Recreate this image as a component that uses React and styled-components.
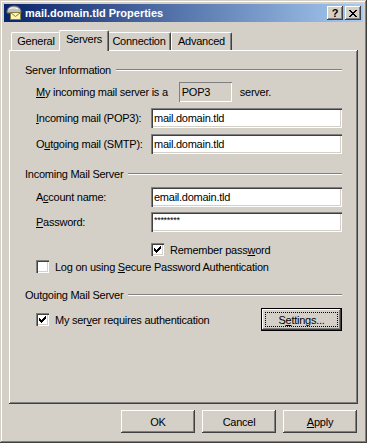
import React from 'react';
import styled, { createGlobalStyle } from 'styled-components';

const Global = createGlobalStyle`
  html, body { margin: 0; padding: 0; background: #d4d0c8; }
`;

const raised = `
  box-shadow: inset -1px -1px #404040, inset 1px 1px #ffffff,
    inset -2px -2px #808080, inset 2px 2px #d4d0c8;
`;

const sunken = `
  box-shadow: inset 1px 1px #808080, inset 2px 2px #404040,
    inset -1px -1px #ffffff, inset -2px -2px #d4d0c8;
`;

const Window = styled.div`
  width: 367px;
  height: 443px;
  box-sizing: border-box;
  padding: 4px;
  background: #d4d0c8;
  box-shadow: inset -1px -1px #404040, inset 1px 1px #d4d0c8,
    inset -2px -2px #808080, inset 2px 2px #ffffff;
  display: flex;
  flex-direction: column;
  font-family: 'Liberation Sans', Arial, sans-serif;
  font-size: 11px;
  letter-spacing: -0.25px;
  color: #000;
`;

const TitleBar = styled.div`
  height: 18px;
  display: flex;
  align-items: center;
  padding: 0 2px 0 2px;
  background: linear-gradient(to right, #0a246a, #a6caf0);
  color: #fff;
  font-weight: bold;
  font-size: 11px;
  letter-spacing: 0;
`;

const TitleText = styled.span`
  flex: 1;
  margin-left: 3px;
  white-space: nowrap;
`;

const CaptionButton = styled.div`
  width: 16px;
  height: 14px;
  margin-left: ${p => p.$gap || 0}px;
  box-sizing: border-box;
  background: #d4d0c8;
  ${raised}
  display: flex;
  align-items: center;
  justify-content: center;
  color: #000;
  font-weight: bold;
  font-size: 11px;
  line-height: 1;
`;

const Body = styled.div`
  flex: 1;
  display: flex;
  flex-direction: column;
  padding: 8px 5px 6px 5px;
`;

const TabStrip = styled.div`
  display: flex;
  align-items: flex-end;
  height: 20px;
  padding-left: 2px;
  position: relative;
  z-index: 1;
`;

const Tab = styled.div`
  box-sizing: border-box;
  width: ${p => p.$w}px;
  height: ${p => (p.$active ? 21 : 18)}px;
  margin: 0 ${p => (p.$active ? -2 : 0)}px ${p => (p.$active ? -1 : 0)}px;
  padding-top: 2px;
  background: #d4d0c8;
  border-top: 1px solid #fff;
  border-left: 1px solid #fff;
  border-right: 1px solid #404040;
  border-radius: 2px 2px 0 0;
  box-shadow: inset -1px 0 #808080;
  text-align: center;
  white-space: nowrap;
  position: relative;
  z-index: ${p => (p.$active ? 2 : 1)};
`;

const Panel = styled.div`
  flex: 1;
  background: #d4d0c8;
  box-shadow: inset -1px -1px #404040, inset 1px 1px #ffffff, inset -2px -2px #808080;
  padding: 13px 16px 0 16px;
  display: flex;
  flex-direction: column;
`;

const SectionHeader = styled.div`
  display: flex;
  align-items: center;
  height: 13px;
  margin-top: ${p => p.$mt || 0}px;
  white-space: nowrap;
`;

const Etch = styled.div`
  flex: 1;
  margin-left: 5px;
  height: 0;
  border-top: 1px solid #808080;
  border-bottom: 1px solid #fff;
`;

const Row = styled.div`
  display: flex;
  align-items: center;
  height: ${p => p.$h || 20}px;
  margin-top: ${p => p.$mt || 0}px;
  padding-left: ${p => (p.$indent == null ? 11 : p.$indent)}px;
  white-space: nowrap;
`;

const Label = styled.span`
  width: ${p => p.$w || 115}px;
  flex: none;
`;

const TextBox = styled.div`
  box-sizing: border-box;
  width: 191px;
  height: 20px;
  background: #fff;
  ${sunken}
  padding: ${p => (p.$mask ? '3px 3px 0' : '0 3px')};
  display: flex;
  align-items: ${p => (p.$mask ? 'flex-start' : 'center')};
  font-size: ${p => (p.$mask ? '9px' : '11px')};
  letter-spacing: ${p => (p.$mask ? '-0.3px' : '-0.25px')};
`;

const StaticBox = styled.div`
  box-sizing: border-box;
  width: 53px;
  height: 20px;
  margin: 0 8px 0 11px;
  box-shadow: inset 1px 1px #808080, inset -1px -1px #ffffff;
  padding: 0 3px;
  display: flex;
  align-items: center;
`;

const Check = styled.div`
  box-sizing: border-box;
  width: 13px;
  height: 13px;
  flex: none;
  background: #fff;
  ${sunken}
  display: flex;
  align-items: center;
  justify-content: center;
  margin-right: 6px;
`;

const Spacer = styled.div`
  flex: 1;
`;

const Button = styled.div`
  box-sizing: border-box;
  width: ${p => p.$w || 74}px;
  height: 23px;
  background: #d4d0c8;
  display: flex;
  align-items: center;
  justify-content: center;
  ${p =>
    p.$default
      ? `box-shadow: inset 0 0 0 1px #000, inset -2px -2px #404040, inset 2px 2px #ffffff, inset -3px -3px #808080;`
      : raised}
  position: relative;
`;

const Focus = styled.span`
  position: absolute;
  left: 4px;
  top: 4px;
  right: 4px;
  bottom: 4px;
  border: 1px dotted #000;
`;

const ButtonRow = styled.div`
  display: flex;
  justify-content: flex-end;
  gap: 7px;
  margin-top: 6px;
  padding-right: 1px;
`;

const CheckMark = () => (
  <svg width="7" height="7" viewBox="0 0 7 7">
    <path d="M0 2h1v1h1v1h1V3h1V2h1V1h1V0h1v3H6v1H5v1H4v1H3v1H2V6H1V5H0z" fill="#000" />
  </svg>
);

const MailIcon = () => (
  <svg width="16" height="16" viewBox="0 0 16 16">
    <path d="M1 7 C1 3 4 1 8 1 C12 1 15 3 15 7 L15 8 L1 8 Z" fill="#c0c0c0" stroke="#606060" strokeWidth="1" />
    <path d="M3 4 C5 2.5 9 2.5 12 4" fill="none" stroke="#fff" strokeWidth="1" />
    <rect x="4.5" y="7.5" width="10" height="7" fill="#fff4b0" stroke="#808040" />
    <path d="M4.5 7.5 L9.5 11.5 L14.5 7.5" fill="none" stroke="#808040" />
  </svg>
);

const CloseGlyph = () => (
  <svg width="8" height="7" viewBox="0 0 8 7">
    <path d="M0 0h2v1h1v1h2V1h1V0h2v1H7v1H6v1H5v1h1v1h1v1h1v1H6V6H5V5H3v1H2v1H0V6h1V5h1V4h1V3H2V2H1V1H0z" fill="#000" />
  </svg>
);

export default function App() {
  return (
    <>
      <Global />
      <Window>
        <TitleBar>
          <MailIcon />
          <TitleText>mail.domain.tld Properties</TitleText>
          <CaptionButton>?</CaptionButton>
          <CaptionButton $gap={2}>
            <CloseGlyph />
          </CaptionButton>
        </TitleBar>
        <Body>
          <TabStrip>
            <Tab $w={50}>General</Tab>
            <Tab $w={50} $active>Servers</Tab>
            <Tab $w={64}>Connection</Tab>
            <Tab $w={61}>Advanced</Tab>
          </TabStrip>
          <Panel>
            <SectionHeader>
              Server Information
              <Etch />
            </SectionHeader>
            <Row $mt={6}>
              <span>
                <u>M</u>y incoming mail server is a
              </span>
              <StaticBox>POP3</StaticBox>
              <span>server.</span>
            </Row>
            <Row $mt={6}>
              <Label>
                <u>I</u>ncoming mail (POP3):
              </Label>
              <TextBox>mail.domain.tld</TextBox>
            </Row>
            <Row $mt={6}>
              <Label>
                O<u>u</u>tgoing mail (SMTP):
              </Label>
              <TextBox>mail.domain.tld</TextBox>
            </Row>

            <SectionHeader $mt={13}>
              Incoming Mail Server
              <Etch />
            </SectionHeader>
            <Row $mt={7}>
              <Label>
                A<u>c</u>count name:
              </Label>
              <TextBox>email.domain.tld</TextBox>
            </Row>
            <Row $mt={5}>
              <Label>
                <u>P</u>assword:
              </Label>
              <TextBox $mask>********</TextBox>
            </Row>
            <Row $mt={11} $h={13} $indent={126}>
              <Check>
                <CheckMark />
              </Check>
              <span>
                Remember pass<u>w</u>ord
              </span>
            </Row>
            <Row $mt={4} $h={13}>
              <Check />
              <span>
                Log on using <u>S</u>ecure Password Authentication
              </span>
            </Row>

            <SectionHeader $mt={15}>
              Outgoing Mail Server
              <Etch />
            </SectionHeader>
            <Row $mt={7} $h={23}>
              <Check>
                <CheckMark />
              </Check>
              <span>
                My ser<u>v</u>er requires authentication
              </span>
              <Spacer />
              <Button $w={81} $default>
                <Focus />S<u>e</u>ttings...
              </Button>
            </Row>
          </Panel>
          <ButtonRow>
            <Button>OK</Button>
            <Button>Cancel</Button>
            <Button>
              <u>A</u>pply
            </Button>
          </ButtonRow>
        </Body>
      </Window>
    </>
  );
}
